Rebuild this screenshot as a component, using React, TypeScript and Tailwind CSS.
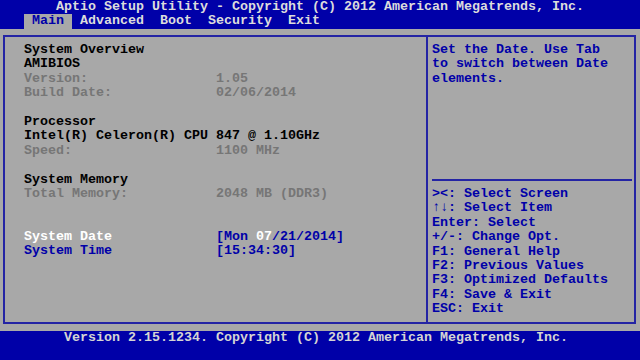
const ROW = 'h-[14.4px] leading-[14.4px] whitespace-pre';

type Line = { label: string; value?: string; tone?: 'head' | 'dim' | 'black' };

const overview: (Line | null)[] = [
  { label: 'System Overview', tone: 'head' },
  { label: 'AMIBIOS', tone: 'head' },
  { label: 'Version:', value: '1.05', tone: 'dim' },
  { label: 'Build Date:', value: '02/06/2014', tone: 'dim' },
  null,
  { label: 'Processor', tone: 'head' },
  { label: 'Intel(R) Celeron(R) CPU 847 @ 1.10GHz', tone: 'black' },
  { label: 'Speed:', value: '1100 MHz', tone: 'dim' },
  null,
  { label: 'System Memory', tone: 'head' },
  { label: 'Total Memory:', value: '2048 MB (DDR3)', tone: 'dim' },
  null,
  null,
];

const keys = [
  '><: Select Screen',
  '↑↓: Select Item',
  'Enter: Select',
  '+/-: Change Opt.',
  'F1: General Help',
  'F2: Previous Values',
  'F3: Optimized Defaults',
  'F4: Save & Exit',
  'ESC: Exit',
];

const InfoRow = ({ line }: { line: Line | null }) => {
  if (!line) return <div className={ROW} />;
  const color = line.tone === 'dim' ? 'text-[#767676]' : 'text-black';
  return (
    <div className={`${ROW} flex ${color}`}>
      <span className="w-[192px]">{line.label}</span>
      {line.value && <span>{line.value}</span>}
    </div>
  );
};

export default function App() {
  return (
    <div
      className="w-[640px] h-[360px] flex flex-col bg-[#a8a8a8] text-[13.333px] font-bold overflow-hidden"
      style={{ fontFamily: '"Liberation Mono", "DejaVu Sans Mono", monospace' }}
    >
      {/* title + tabs */}
      <div className="h-[28.8px] bg-[#0000a8] text-[#dcdcdc]">
        <div className={`${ROW} pl-[56px]`}>
          Aptio Setup Utility - Copyright (C) 2012 American Megatrends, Inc.
        </div>
        <div className={`${ROW} pl-[24px] flex`}>
          <span className="bg-[#a8a8a8] text-[#0000a8]"> Main </span>
          <span> Advanced  Boot  Security  Exit</span>
        </div>
      </div>

      {/* main frame */}
      <div className="h-[302.4px] pt-[6px] pl-[3px]">
        <div className="w-[633px] h-[289px] border-2 border-[#2424a4] flex">
          <div className="w-[421px] pl-[19px] pt-[6.2px]">
            {overview.map((line, i) => (
              <InfoRow key={i} line={line} />
            ))}
            <div className={`${ROW} flex`}>
              <span className="w-[192px] text-white">System Date</span>
              <span className="text-[#0000a8]">
                [Mon <span className="text-white">07</span>/21/2014]
              </span>
            </div>
            <div className={`${ROW} flex text-[#0000a8]`}>
              <span className="w-[192px]">System Time</span>
              <span>[15:34:30]</span>
            </div>
          </div>

          <div className="flex-1 border-l-2 border-[#2424a4] pr-[2px] pt-[6.2px] text-[#0000a8]">
            <div className="pl-[4px]">
              <div className={ROW}>Set the Date. Use Tab</div>
              <div className={ROW}>to switch between Date</div>
              <div className={ROW}>elements.</div>
            </div>
            <div className="h-[86.4px]" />
            <div className="h-[14.4px] pl-[4px] flex items-center">
              <div className="w-full h-[2px] bg-[#2424a4]" />
            </div>
            <div className="pl-[4px]">
              {keys.map((k) => (
                <div key={k} className={ROW}>
                  {k}
                </div>
              ))}
            </div>
          </div>
        </div>
      </div>

      {/* footer */}
      <div className="flex-1 bg-[#0000a8] text-[#d4d4d4]">
        <div className={`${ROW} pl-[64px]`}>
          Version 2.15.1234. Copyright (C) 2012 American Megatrends, Inc.
        </div>
      </div>
    </div>
  );
}
